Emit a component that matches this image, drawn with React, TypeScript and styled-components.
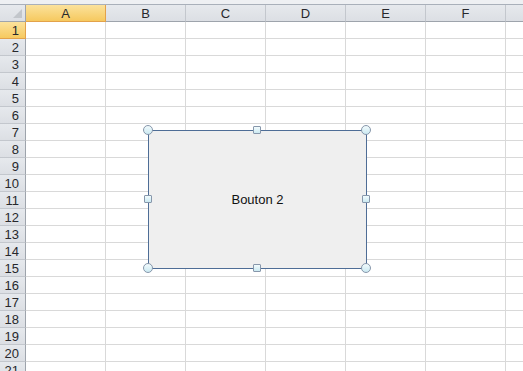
import React from 'react'
import styled, { createGlobalStyle, css } from 'styled-components'

const GlobalStyle = createGlobalStyle`
  html, body {
    margin: 0;
    padding: 0;
    background: #ffffff;
    overflow: hidden;
    font-family: "Liberation Sans", Arial, sans-serif;
  }
`

const columns = ['A', 'B', 'C', 'D', 'E', 'F', 'G']
const rows = Array.from({ length: 21 }, (_, i) => i + 1)

const Sheet = styled.div`
  position: relative;
  width: 523px;
  height: 371px;
  overflow: hidden;
  background: #ffffff;
`

const TopStrip = styled.div`
  height: 4px;
  background: #eef0f3;
  border-bottom: 1px solid #a9b0ba;
`

const Row = styled.div`
  display: flex;
  white-space: nowrap;
`

const headerBase = css`
  box-sizing: border-box;
  flex: none;
  height: 17px;
  display: flex;
  align-items: center;
  justify-content: center;
  font-size: 13px;
  color: #27282c;
  background: linear-gradient(#e6e9ed, #dcdfe4);
  border-right: 1px solid #c3c7cd;
  border-bottom: 1px solid #9ea4ac;
`

const selectedHead = css`
  background: linear-gradient(#fbe29c, #f6c95f);
  border-right-color: #e3a24a;
  border-bottom-color: #e3a24a;
`

const Corner = styled.div`
  ${headerBase};
  position: relative;
  width: 26px;
  border-right-color: #9ea4ac;

  &::after {
    content: '';
    position: absolute;
    right: 3px;
    bottom: 3px;
    width: 0;
    height: 0;
    border-left: 9px solid transparent;
    border-bottom: 9px solid #c2c6cb;
  }
`

const ColHead = styled.div<{ $selected?: boolean }>`
  ${headerBase};
  width: 80px;
  ${(p) => p.$selected && selectedHead};
`

const RowHead = styled.div<{ $selected?: boolean }>`
  ${headerBase};
  width: 26px;
  justify-content: flex-end;
  padding-right: 6px;
  border-right-color: #9ea4ac;
  border-bottom-color: #c3c7cd;
  ${(p) => p.$selected && selectedHead};
`

const Cell = styled.div`
  box-sizing: border-box;
  flex: none;
  width: 80px;
  height: 17px;
  border-right: 1px solid #d9d9d9;
  border-bottom: 1px solid #d9d9d9;
`

const Shape = styled.div`
  position: absolute;
  left: 148px;
  top: 130px;
  width: 219px;
  height: 139px;
  box-sizing: border-box;
  border: 1px solid #4e6d96;
  background: #efefef;
  display: flex;
  align-items: center;
  justify-content: center;
  font-size: 13px;
  color: #111111;
`

const Handle = styled.div<{ $round?: boolean }>`
  position: absolute;
  box-sizing: border-box;
  width: ${(p) => (p.$round ? 10 : 8)}px;
  height: ${(p) => (p.$round ? 10 : 8)}px;
  margin-left: ${(p) => (p.$round ? -5 : -4)}px;
  margin-top: ${(p) => (p.$round ? -5 : -4)}px;
  border: 1px solid #8797ab;
  border-radius: ${(p) => (p.$round ? '50%' : '1px')};
  background: linear-gradient(#f2fbfd, #cbe9f1);
`

const handles = [
  { x: 0, y: 0, round: true },
  { x: 50, y: 0, round: false },
  { x: 100, y: 0, round: true },
  { x: 0, y: 50, round: false },
  { x: 100, y: 50, round: false },
  { x: 0, y: 100, round: true },
  { x: 50, y: 100, round: false },
  { x: 100, y: 100, round: true },
]

const ShapeFrame = styled.div`
  position: absolute;
  left: 148px;
  top: 130px;
  width: 218px;
  height: 138px;
`

const App: React.FC = () => {
  return (
    <Sheet>
      <GlobalStyle />
      <TopStrip />
      <Row>
        <Corner />
        {columns.map((c) => (
          <ColHead key={c} $selected={c === 'A'}>
            {c}
          </ColHead>
        ))}
      </Row>
      {rows.map((r) => (
        <Row key={r}>
          <RowHead $selected={r === 1}>{r}</RowHead>
          {columns.map((c) => (
            <Cell key={c} />
          ))}
        </Row>
      ))}

      <Shape>Bouton 2</Shape>
      <ShapeFrame>
        {handles.map((h, i) => (
          <Handle
            key={i}
            $round={h.round}
            style={{ left: `${h.x}%`, top: `${h.y}%` }}
          />
        ))}
      </ShapeFrame>
    </Sheet>
  )
}

export default App
